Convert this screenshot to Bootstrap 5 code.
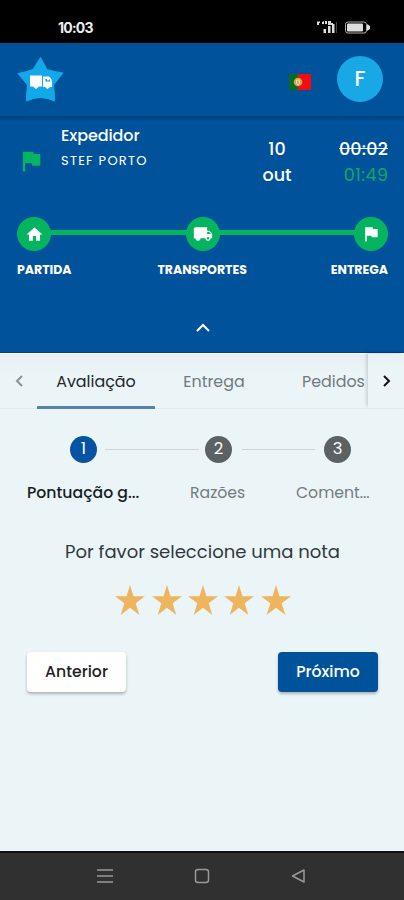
<!DOCTYPE html>
<html lang="pt">
<head>
<meta charset="utf-8">
<meta name="viewport" content="width=device-width, initial-scale=1">
<title>Avaliação</title>
<link href="https://cdn.jsdelivr.net/npm/bootstrap@5.3.0/dist/css/bootstrap.min.css" rel="stylesheet">
<style>
body{font-family:Poppins,Inter,"Open Sans",sans-serif;background:#ebf5f8;width:404px;height:900px;overflow:hidden;color:#222b30}
svg{display:block;flex:none}
.status{height:43px;background:#000;padding:13px 32px 0 58px}
.clock{font:700 14px/30px Inter,sans-serif;color:#eee;letter-spacing:-.8px}
.topbar{height:73px;background:#00529b;padding:0 22px 0 16px}
.avatar{width:46px;height:46px;background:#18a8e6;font-size:21px;font-weight:500;margin:-2px -1px 0 26px}
.logo{margin-top:-3px}
.flagpt{margin-top:4px}
.trip{height:237px;background:linear-gradient(#00427f,#00529b 6px);padding:8px 16px 0 17px;border-bottom:1px solid #003f8d}
.trip-top{height:93px}
.trip-flag{margin-top:23px}
.sender{width:214px;padding-left:16px}
.s-name{font-size:16px;line-height:23px;font-weight:500;letter-spacing:-.1px}
.s-place{font-size:13px;line-height:27px;letter-spacing:1.25px}
.date,.hours{font-size:17.5px;line-height:26px;font-weight:500}
.date{width:36px}
.hours{letter-spacing:.2px}
.green{color:#0cab65;font-weight:400;letter-spacing:.5px;margin-right:-.5px}
.dot{width:34px;height:34px;background:#04b45f;flex:none}
.line{height:5px;background:#04b45f;margin:0 -1px 4px}
.labels{font-size:12.5px;font-weight:700;line-height:18px;margin-top:10px}
.labels .mid{margin-left:2px}
.up{margin:44px auto 0}
.tabs{height:56px;border-top:1px solid #fff;border-bottom:1px solid #dfe8eb;background:linear-gradient(#e7eef1,#ebf5f8 20px);font-size:15.900px}
.arrow{width:37px}
.tab-item{width:118px;color:#717a7e;height:55px}
.tab-item.on{color:#20272b;border-bottom:3px solid #5482b1;padding-top:3px}
.tab-last{width:60px;margin-left:29px}
.next{width:36px;margin-left:auto;padding-left:2px;box-shadow:-2px -2px 3px #0002;background:linear-gradient(#e9f1f4,#ebf5f8 20px)}
.steps{padding:27px 28px 0;height:83px}
.num{width:27px;height:27px;background:#5c6164;font-size:16.500px;flex:none}
.num.on{background:#0553a2;margin-left:42px}
.bar{height:1px;background:#cbd4d7;margin-top:13px}
.bar-a{width:94px;margin-left:8px;margin-right:6px}
.bar-b{width:73px;margin-left:10px;margin-right:9px}
.names{font-size:15.700px;line-height:22px;color:#747c80;height:44px;margin-top:-10px}
.n1{margin-left:27px;width:163px;color:#171e22;font-weight:500}
.n2{width:106px}
.question{font-size:18px;line-height:26px;margin-left:1px;text-align:center;margin-top:13px;color:#30383c}
.stars{margin:20px 0 0 2px;gap:6.4px;color:#edb65e}
.actions{padding:37px 26px 0 27px}
.actions .btn{width:99px;height:40px;padding:0;border:0;font-size:15.700px;font-weight:500;border-radius:4px;box-shadow:0 2px 3px #0004}
.actions .back{background:#fff;color:#222}
.actions .go{background:#00529b;color:#fff;width:100px}
.sysnav{height:49px;background:#303030;border-top:2px solid #111;padding:0 98px 2px 97px}
</style>
<script src="https://cdn.jsdelivr.net/npm/bootstrap@5.3.0/dist/js/bootstrap.bundle.min.js"></script>
</head>
<body class="d-flex flex-column">
<svg width="0" height="0" class="position-absolute"><defs>
<symbol id="truck" viewBox="0 0 24 24"><path d="M20 8h-3V4H3c-1.100 0-2 .9-2 2v11h2a3 3 0 0 0 6 0h6a3 3 0 0 0 6 0h2v-5zM19.500 9.500l2 2.500H17V9.500zM18 18.500a1.500 1.500 0 1 1 0-3 1.500 1.500 0 0 1 0 3z"/></symbol>
<symbol id="flag" viewBox="0 0 24 24"><path d="M14.400 6 14 4H5v17h2v-7h5.600l.4 2h7V6z"/></symbol>
<symbol id="star" viewBox="0 0 30 30"><path d="M15 0l3.500 11.300H30l-9.300 7L24.300 30 15 22.700 5.700 30l3.600-11.700L0 11.300h11.500z"/></symbol>
</defs></svg>
<header>
<div class="status d-flex justify-content-between">
<span class="clock">10:03</span>
<svg width="58" height="28" viewBox="0 0 58 28" fill="#ddd"><path d="M3 8.500h3v1.500H5v2H3zM8 9l2-1v3H8zM11 8h2v3h-2zM14 8h3v2h2v2h-5zM9.500 16h2.500v4H9.500zM14 13h2.500v7H14zM18 11h2.500v9H18z"/><path d="M22 9h1v11h-1z" fill="#444"/><rect x="31.500" y="9" width="21" height="11" rx="2.500" fill="none" stroke="#aaa"/><rect x="33" y="10.500" width="16" height="8" rx="1"/><path d="M53 11l3 2v3l-3 2z"/></svg>
</div>
<div class="topbar d-flex align-items-center">
<svg width="48" height="48" viewBox="0 0 48 48" class="logo me-auto"><path d="M24.500 3.500l6.500 12q8 2.500 16 3.500l-9.500 12q1 8 1 16-14-7-28 0 0-8 1-16L2 19.500q8-1.500 15-4z" fill="#13a9e9" stroke="#13a9e9" stroke-linejoin="round"/><path d="M14 21.500h12v11h-3l-3 2.500-3-2.500h-3zM27 22.500h5.500q3.500 1.500 3.500 5.500v5h-2l-2.500 2-2.500-2h-2z" fill="#fff"/><path d="M29.500 25h1.500v1.500h2V25l1.500 2.500h-5z" fill="#0796d6"/></svg>
<svg class="flagpt" width="22" height="16" viewBox="0 0 22 16"><path fill="#096b26" d="M0 0h9v16H0z"/><path fill="#f50b12" d="M9 0h13v16H9z"/><circle cx="9" cy="8" r="4.300" fill="#c9ad38"/><path fill="#e2a08c" stroke="#e8dcae" d="M7.500 6h3v3.500L9 11l-1.500-1.500z"/></svg>
<div class="avatar rounded-circle text-white d-flex align-items-center justify-content-center">F</div>
</div>
</header>
<section class="trip text-white">
<div class="trip-top d-flex">
<svg class="trip-flag" width="28" height="28" viewBox="0 0 24 24" fill="#04b45f"><use href="#flag"/></svg>
<div class="sender"><div class="s-name">Expedidor</div><div class="s-place">STEF PORTO</div></div>
<div class="date text-center pt-2 mt-1">10<br>out</div>
<div class="hours text-end ms-auto pt-2 mt-1"><s>00:02</s><br><span class="green">01:49</span></div>
</div>
<div class="d-flex align-items-center">
<div class="dot rounded-circle d-flex align-items-center justify-content-center"><svg width="19" height="19" viewBox="0 0 24 24" fill="#fff"><path d="M10 20v-6h4v6h5v-8h3L12 3 2 12h3v8z"/></svg></div>
<div class="line flex-fill"></div>
<div class="dot rounded-circle d-flex align-items-center justify-content-center"><svg width="20" height="20" fill="#fff"><use href="#truck"/></svg></div>
<div class="line flex-fill"></div>
<div class="dot rounded-circle d-flex align-items-center justify-content-center"><svg width="20" height="20" fill="#fff"><use href="#flag"/></svg></div>
</div>
<div class="labels d-flex justify-content-between"><span>PARTIDA</span><span class="mid">TRANSPORTES</span><span>ENTREGA</span></div>
<svg class="up" width="14" height="10" viewBox="0 0 14 10" fill="none" stroke="#fff" stroke-width="2"><path d="M1 8l6-6 6 6"/></svg>
</section>
<main class="flex-fill">
<nav class="tabs d-flex">
<div class="arrow d-flex align-items-center justify-content-center"><svg width="8" height="12" viewBox="0 0 8 12" fill="none" stroke="#899195" stroke-width="2"><path d="M7 1L2 6l5 5"/></svg></div>
<div class="tab-item on d-flex align-items-center justify-content-center">Avaliação</div>
<div class="tab-item d-flex align-items-center justify-content-center">Entrega</div>
<div class="tab-item tab-last d-flex align-items-center">Pedidos</div>
<div class="next d-flex align-items-center justify-content-center"><svg width="8" height="12" viewBox="0 0 8 12" fill="none" stroke="#111" stroke-width="2"><path d="M1 1l5 5-5 5"/></svg></div>
</nav>
<div class="steps d-flex text-white">
<div class="num on rounded-circle d-flex align-items-center justify-content-center">1</div><div class="bar bar-a"></div>
<div class="num rounded-circle d-flex align-items-center justify-content-center">2</div><div class="bar bar-b"></div>
<div class="num rounded-circle d-flex align-items-center justify-content-center">3</div>
</div>
<div class="names d-flex"><span class="n1">Pontuação g...</span><span class="n2">Razões</span><span>Coment...</span></div>
<div class="question">Por favor seleccione uma nota</div>
<div class="stars d-flex justify-content-center">
<svg width="30" height="30" fill="currentColor"><use href="#star"/></svg><svg width="30" height="30" fill="currentColor"><use href="#star"/></svg><svg width="30" height="30" fill="currentColor"><use href="#star"/></svg><svg width="30" height="30" fill="currentColor"><use href="#star"/></svg><svg width="30" height="30" fill="currentColor"><use href="#star"/></svg>
</div>
<div class="actions d-flex justify-content-between"><button class="btn back">Anterior</button><button class="btn go">Próximo</button></div>
</main>
<footer class="sysnav d-flex align-items-center justify-content-between">
<svg width="16" height="16" stroke="#999" stroke-width="1.500"><path d="M0 2h16M0 8h16M0 14h16"/></svg>
<svg width="16" height="16" fill="none" stroke="#999" stroke-width="1.500"><rect x="1.500" y="1.500" width="13" height="13" rx="2.500"/></svg>
<svg width="16" height="16" fill="none" stroke="#999" stroke-width="1.500"><path d="M14 2v12L2.500 8z" stroke-linejoin="round"/></svg>
</footer>
</body>
</html>
